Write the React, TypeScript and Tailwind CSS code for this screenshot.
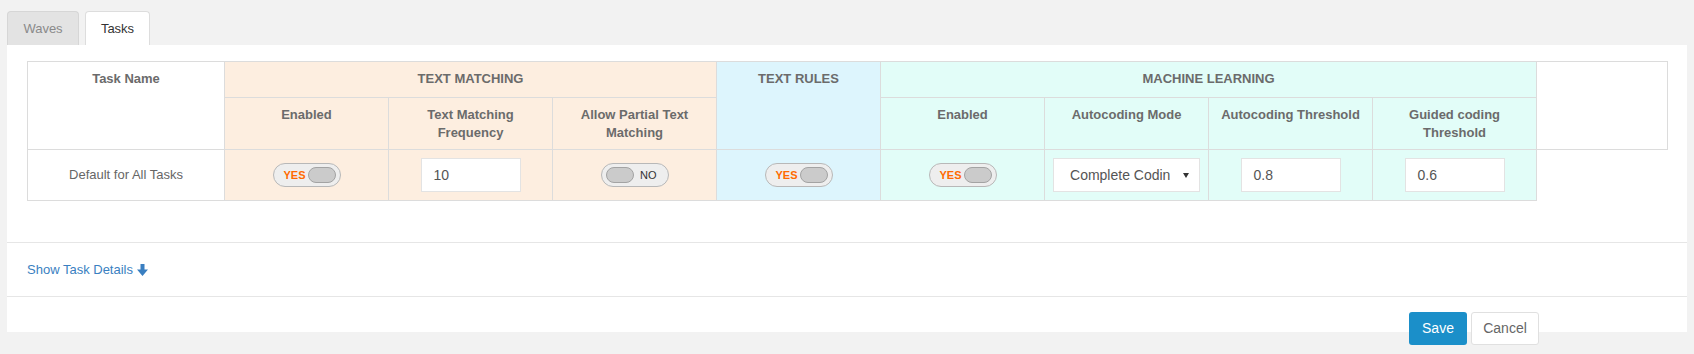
import React from "react";

const peach = "bg-[#fdeee0]";
const blue = "bg-[#ddf5fd]";
const mint = "bg-[#e2fdf8]";

export default function App() {
    return (
        <div className={"min-h-[354px] bg-[#f2f2f2] px-[7px] pt-[11px] font-['Liberation_Sans',Arial,sans-serif]"}>
            <Tabs/>
            <div className={"bg-white"}>
                <div className={"px-[20px] pt-[16px]"}>
                    <TaskTable/>
                </div>
                <div className={"h-[41px]"}/>
                <div className={"h-[54px] border-t border-[#e6e6e6] px-[20px] flex items-center"}>
                    <a className={"text-[13px] text-[#3a7fc1] flex items-center gap-[4px] cursor-pointer"}>
                        Show Task Details
                        <svg width="11" height="12" viewBox="0 0 11 12">
                            <path d="M3.5 0h4v5.5h3.5L5.5 12 0 5.5h3.5z" fill="#3a7fc1"/>
                        </svg>
                    </a>
                </div>
                <div className={"h-[36px] border-t border-[#e6e6e6] flex justify-end gap-[4px] pr-[148px] pt-[15px]"}>
                    <button className={"h-[33px] w-[58px] shrink-0 rounded-[3px] bg-[#1b8fc9] text-white text-[14px]"}>Save</button>
                    <button className={"h-[33px] w-[68px] shrink-0 rounded-[3px] bg-white border border-[#e0e0e0] text-[#666] text-[14px]"}>Cancel</button>
                </div>
            </div>
        </div>
    )
}

const Tabs = () => {
    return (
        <div className={"flex gap-[6px] h-[34px] text-[13px]"}>
            <div className={"w-[72px] flex items-center justify-center rounded-t-[4px] border border-b-0 border-[#d6d6d6] bg-[#e3e3e3] text-[#8a8a8a]"}>Waves</div>
            <div className={"w-[65px] flex items-center justify-center rounded-t-[4px] border border-b-0 border-[#dddddd] bg-white text-[#333]"}>Tasks</div>
        </div>
    )
}

const Th = ({children, className = "", ...rest}: React.ThHTMLAttributes<HTMLTableCellElement>) => (
    <th {...rest}
        className={"border border-[#dcdcdc] px-[8px] pt-[8px] align-top text-center text-[13px] leading-[18px] font-bold text-[#6b6b6b] " + className}>
        {children}
    </th>
)

const Td = ({children, className = ""}: { children?: React.ReactNode, className?: string }) => (
    <td className={"border border-[#dcdcdc] align-middle text-center " + className}>
        <div className={"flex justify-center items-center"}>{children}</div>
    </td>
)

const TaskTable = () => {
    return (
        <table className={"table-fixed border-collapse w-[1640px]"}>
            <colgroup>
                <col className={"w-[197px]"}/>
                <col className={"w-[164px]"}/>
                <col className={"w-[164px]"}/>
                <col className={"w-[164px]"}/>
                <col className={"w-[164px]"}/>
                <col className={"w-[164px]"}/>
                <col className={"w-[164px]"}/>
                <col className={"w-[164px]"}/>
                <col className={"w-[164px]"}/>
                <col className={"w-[131px]"}/>
            </colgroup>
            <thead>
            <tr className={"h-[36px]"}>
                <Th rowSpan={2} className={"bg-white"}>Task Name</Th>
                <Th colSpan={3} className={peach}>TEXT MATCHING</Th>
                <Th rowSpan={2} className={blue}>TEXT RULES</Th>
                <Th colSpan={4} className={mint}>MACHINE LEARNING</Th>
                <Th rowSpan={2} className={"bg-white"}></Th>
            </tr>
            <tr className={"h-[52px]"}>
                <Th className={peach}>Enabled</Th>
                <Th className={peach}>Text Matching Frequency</Th>
                <Th className={peach}>Allow Partial Text Matching</Th>
                <Th className={mint}>Enabled</Th>
                <Th className={mint}>Autocoding Mode</Th>
                <Th className={mint}>Autocoding Threshold</Th>
                <Th className={mint}>Guided coding Threshold</Th>
            </tr>
            </thead>
            <tbody>
            <tr className={"h-[51px]"}>
                <Td className={"bg-white"}>
                    <span className={"text-[13px] text-[#666]"}>Default for All Tasks</span>
                </Td>
                <Td className={peach}><Toggle on/></Td>
                <Td className={peach}><TextInput value={"10"}/></Td>
                <Td className={peach}><Toggle on={false}/></Td>
                <Td className={blue}><Toggle on/></Td>
                <Td className={mint}><Toggle on/></Td>
                <Td className={mint}><ModeSelect/></Td>
                <Td className={mint}><TextInput value={"0.8"}/></Td>
                <Td className={mint}><TextInput value={"0.6"}/></Td>
            </tr>
            </tbody>
        </table>
    )
}

const Toggle = ({on}: { on: boolean }) => {
    const knob = <div className={"w-[28px] h-[16px] rounded-full bg-[#cbcbcb] border border-[#a3a3a3]"}/>
    return (
        <div className={"w-[68px] h-[24px] rounded-full border border-[#b8b8b8] bg-[#eeeeee] flex items-center justify-between px-[4px]"}>
            {on ? (
                <>
                    <span className={"ml-[6px] text-[11px] font-bold text-[#ff6a00] leading-none"}>YES</span>
                    {knob}
                </>
            ) : (
                <>
                    {knob}
                    <span className={"mr-[7px] text-[11px] text-[#333] leading-none"}>NO</span>
                </>
            )}
        </div>
    )
}

const TextInput = ({value}: { value: string }) => {
    return (
        <div className={"w-[100px] h-[34px] border border-[#e3e3e3] bg-white flex items-center pl-[12px] text-[14px] text-[#555]"}>
            {value}
        </div>
    )
}

const ModeSelect = () => {
    return (
        <div className={"w-[147px] h-[34px] border border-[#e3e3e3] bg-white flex items-center pl-[16px] pr-[10px] text-[14px] text-[#555]"}>
            <div className={"w-[100px] overflow-hidden whitespace-nowrap text-left"}>Complete Coding</div>
            <svg className={"ml-auto"} width="6" height="5" viewBox="0 0 6 5">
                <path d="M0 0h6L3 5z" fill="#333"/>
            </svg>
        </div>
    )
}
